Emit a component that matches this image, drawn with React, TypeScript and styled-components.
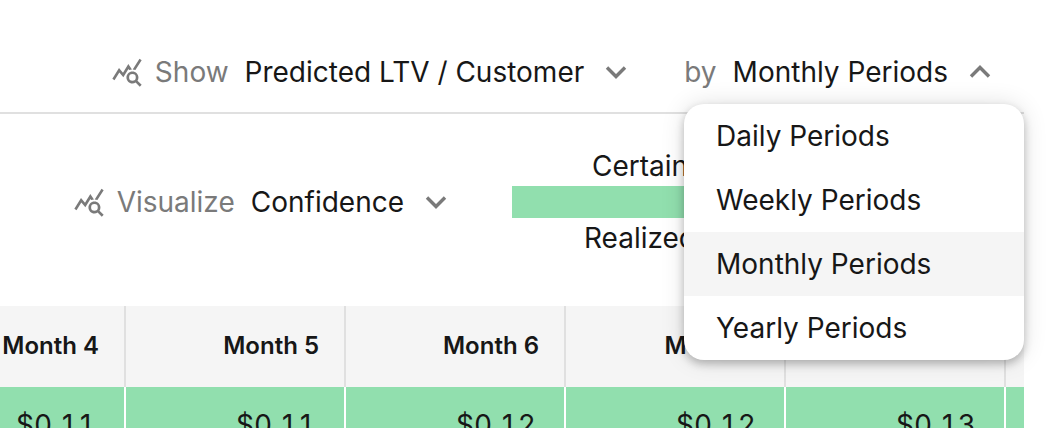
import React, { useState } from "react";
import styled, { createGlobalStyle } from "styled-components";
import { MdQueryStats } from "react-icons/md";

const color = {
  text: "#171717",
  muted: "#7a7a7a",
  line: "#e0e0e0",
  surface: "#f5f5f5",
  green: "#91dfae",
};

const GlobalStyle = createGlobalStyle`
  *, *::before, *::after { box-sizing: border-box; }
  html { scrollbar-width: none; }
  body {
    margin: 0;
    background: #fff;
    color: ${color.text};
    font-family: Inter, "Liberation Sans", sans-serif;
    font-size: 28px;
    line-height: 40px;
  }
`;

const Page = styled.main`
  padding-right: 32px;
`;

const Toolbar = styled.header`
  display: flex;
  justify-content: flex-end;
  gap: 56px;
  padding: 52px 32px 20px 0;
  border-bottom: 2px solid ${color.line};
`;

const VisualizeBar = styled.section`
  display: flex;
  align-items: center;
  justify-content: flex-end;
  gap: 64px;
  padding: 32px 0 48px;
`;

const Control = styled.div`
  display: flex;
  align-items: center;
  white-space: nowrap;
`;

const MenuAnchor = styled.div`
  position: relative;
`;

const StatsIcon = styled(MdQueryStats)`
  width: 32px;
  height: 32px;
  margin-right: 12px;
  color: ${color.muted};
`;

const Label = styled.span`
  margin-right: 16px;
  color: ${color.muted};
`;

const Trigger = styled.button`
  display: flex;
  align-items: center;
  gap: 20px;
  padding: 0;
  border: 0;
  background: none;
  color: inherit;
  font: inherit;
  cursor: pointer;
`;

const ChevronSvg = styled.svg<{ $up?: boolean }>`
  width: 24px;
  height: 24px;
  fill: none;
  stroke: ${color.muted};
  stroke-width: 3.4;
  transform: ${(p) => (p.$up ? "rotate(180deg)" : "none")};
`;

const Menu = styled.ul`
  position: absolute;
  top: 52px;
  right: -32px;
  z-index: 1;
  width: 340px;
  margin: 0;
  padding: 0;
  overflow: hidden;
  list-style: none;
  border-radius: 20px;
  background: #fff;
  box-shadow: 0 4px 8px rgba(0, 0, 0, 0.24), 0 0 24px rgba(0, 0, 0, 0.12);
`;

const MenuOption = styled.button<{ $selected: boolean }>`
  display: block;
  width: 100%;
  padding: 12px 32px;
  border: 0;
  background: ${(p) => (p.$selected ? color.surface : "transparent")};
  color: inherit;
  font: inherit;
  text-align: left;
  cursor: pointer;
`;

const Legend = styled.div`
  flex: 0 0 512px;
`;

const LegendSegment = styled.div`
  width: 50%;
  text-align: center;
`;

const Swatch = styled.div`
  height: 32px;
  background: ${color.green};
`;

const Table = styled.table`
  width: 100%;
  table-layout: fixed;
  border-collapse: separate;
  border-spacing: 0;
  text-align: right;
  white-space: nowrap;
  overflow: hidden;
`;

const Column = styled.col<{ $width?: number }>`
  width: ${(p) => (p.$width ? `${p.$width}px` : "auto")};
`;

const HeadCell = styled.th`
  height: 81px;
  padding: 0 25px 2px 0;
  border-right: 2px solid ${color.line};
  background: ${color.surface};
  font-size: 24px;
  font-weight: 600;
  text-align: right;

  &:last-child {
    padding: 0;
    border-right: 0;
  }
`;

const ValueCell = styled.td`
  height: 76px;
  padding: 0 28px 0 0;
  border-right: 2px solid #fff;
  background: ${color.green};
  font-variant-numeric: tabular-nums;

  &:last-child {
    padding: 0;
    border-right: 0;
  }
`;

const Chevron = ({ up }: { up?: boolean }) => (
  <ChevronSvg $up={up} viewBox="0 0 24 24" aria-hidden="true">
    <path d="M3 7.5 12 16.5 21 7.5" />
  </ChevronSvg>
);

const periods = ["Daily Periods", "Weekly Periods", "Monthly Periods", "Yearly Periods"];

const months = [
  { name: "Month 4", value: "$0.11" },
  { name: "Month 5", value: "$0.11" },
  { name: "Month 6", value: "$0.12" },
  { name: "Month 7", value: "$0.12" },
  { name: "Month 8", value: "$0.13" },
];

export default function App() {
  const [period, setPeriod] = useState("Monthly Periods");
  const [open, setOpen] = useState(true);

  return (
    <Page>
      <GlobalStyle />
      <Toolbar>
        <Control>
          <StatsIcon aria-hidden="true" />
          <Label id="show-label">Show</Label>
          <Trigger type="button" aria-describedby="show-label">
            Predicted LTV / Customer
            <Chevron />
          </Trigger>
        </Control>
        <MenuAnchor>
          <Control>
            <Label id="by-label">by</Label>
            <Trigger
              type="button"
              aria-describedby="by-label"
              aria-haspopup="listbox"
              aria-expanded={open}
              onClick={() => setOpen(!open)}
            >
              {period}
              <Chevron up={open} />
            </Trigger>
          </Control>
          {open && (
            <Menu role="listbox" aria-labelledby="by-label">
              {periods.map((name) => (
                <li key={name} role="presentation">
                  <MenuOption
                    type="button"
                    role="option"
                    aria-selected={name === period}
                    $selected={name === period}
                    onClick={() => {
                      setPeriod(name);
                      setOpen(false);
                    }}
                  >
                    {name}
                  </MenuOption>
                </li>
              ))}
            </Menu>
          )}
        </MenuAnchor>
      </Toolbar>

      <VisualizeBar>
        <Control>
          <StatsIcon aria-hidden="true" />
          <Label id="visualize-label">Visualize</Label>
          <Trigger type="button" aria-describedby="visualize-label">
            Confidence
            <Chevron />
          </Trigger>
        </Control>
        <Legend>
          <LegendSegment>
            <div>Certain</div>
            <Swatch />
            <div>Realized</div>
          </LegendSegment>
        </Legend>
      </VisualizeBar>

      <Table>
        <colgroup>
          <Column $width={126} />
          <Column $width={220} />
          <Column $width={220} />
          <Column $width={220} />
          <Column $width={220} />
          <Column />
        </colgroup>
        <thead>
          <tr>
            {months.map((m) => (
              <HeadCell key={m.name} scope="col">
                {m.name}
              </HeadCell>
            ))}
            <HeadCell as="td" />
          </tr>
        </thead>
        <tbody>
          <tr>
            {months.map((m) => (
              <ValueCell key={m.name}>{m.value}</ValueCell>
            ))}
            <ValueCell />
          </tr>
        </tbody>
      </Table>
    </Page>
  );
}
